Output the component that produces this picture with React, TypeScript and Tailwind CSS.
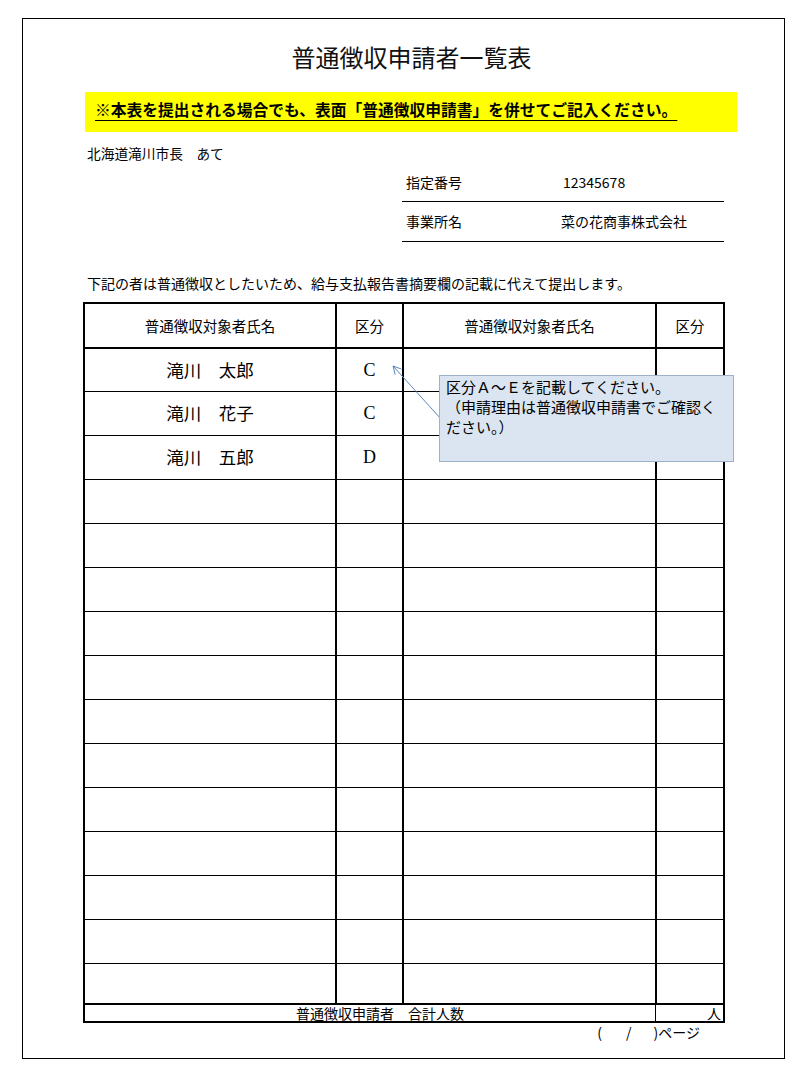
import React from 'react';

interface Row {
  name: string;
  kubun: string;
  height: string;
}

const rowHeights = [
  'h-[43px] border-b',
  'h-[44px] border-b',
  'h-[44px] border-b',
  'h-[44px] border-b',
  'h-[44px] border-b',
  'h-[44px] border-b',
  'h-[44px] border-b',
  'h-[44px] border-b',
  'h-[44px] border-b',
  'h-[44px] border-b',
  'h-[44px] border-b',
  'h-[44px] border-b',
  'h-[44px] border-b',
  'h-[44px] border-b',
  'h-[39px]',
];

const people = [
  { name: '滝川　太郎', kubun: 'C' },
  { name: '滝川　花子', kubun: 'C' },
  { name: '滝川　五郎', kubun: 'D' },
];

const rows: Row[] = rowHeights.map((height, i) => ({
  name: people[i]?.name ?? '',
  kubun: people[i]?.kubun ?? '',
  height,
}));

const App: React.FC = () => {
  return (
    <div className="min-h-[1077px] w-[806px] bg-white pl-[22px] pt-[18px] font-['Noto_Sans_CJK_JP','Noto_Sans',sans-serif] text-black">
      <div className="relative h-[1041px] w-[763px] border border-black">
        {/* title */}
        <div className="flex h-[73px] items-center justify-center pl-[16px] pt-[3px] text-[24px] leading-none text-[#111]">
          普通徴収申請者一覧表
        </div>

        {/* notice band */}
        <div className="ml-[62px] flex h-[40px] w-[652px] items-center bg-[#ffff00] pb-[4px] pl-[10px]">
          <span className="text-[15.75px] font-bold leading-none underline decoration-1 underline-offset-[4px]">
            ※本表を提出される場合でも、表面「普通徴収申請書」を併せてご記入ください。
          </span>
        </div>

        <p className="ml-[64px] mt-[11px] text-[13.7px] leading-[20px]">北海道滝川市長　あて</p>

        {/* office info */}
        <div className="ml-[379px] mt-[1px] w-[322px] text-[14px]">
          <div className="flex h-[38px] items-center border-b border-black pl-[4px]">
            <span className="w-[157px]">指定番号</span>
            <span>12345678</span>
          </div>
          <div className="flex h-[40px] items-center border-b border-black pl-[4px]">
            <span className="w-[155px]">事業所名</span>
            <span>菜の花商事株式会社</span>
          </div>
        </div>

        <p className="ml-[64px] mt-[31px] text-[14px] leading-[20px]">
          下記の者は普通徴収としたいため、給与支払報告書摘要欄の記載に代えて提出します。
        </p>

        {/* list table */}
        <div className="ml-[60px] mt-[9px] w-[642px] border-2 border-black">
          <div className="flex h-[45px] border-b-2 border-black text-[14.5px]">
            <div className="flex w-[252px] items-center justify-center border-r-2 border-black">普通徴収対象者氏名</div>
            <div className="flex w-[67px] items-center justify-center border-r-2 border-black">区分</div>
            <div className="flex w-[253px] items-center justify-center border-r-2 border-black">普通徴収対象者氏名</div>
            <div className="flex flex-1 items-center justify-center">区分</div>
          </div>
          {rows.map((row, i) => (
            <div key={i} className={`flex border-black ${row.height}`}>
              <div className="flex w-[252px] items-center justify-center border-r-2 border-black text-[17.5px]">
                {row.name}
              </div>
              <div className="flex w-[67px] items-center justify-center border-r-2 border-black font-['Liberation_Serif',serif] text-[18px]">
                {row.kubun}
              </div>
              <div className="w-[253px] border-r-2 border-black" />
              <div className="flex-1" />
            </div>
          ))}
          <div className="flex h-[18px] border-t-2 border-black text-[14px] leading-[16px]">
            <div className="flex w-[570px] justify-center pl-[20px]">普通徴収申請者　合計人数</div>
            <div className="flex flex-1 justify-end border-l border-black pr-[2px]">人</div>
          </div>
        </div>

        <div className="mt-[1px] flex justify-end pr-[84px] text-[14px] leading-[16px]">
          <span>(</span>
          <span className="ml-[24px]">/</span>
          <span className="ml-[22px]">)</span>
          <span>ページ</span>
        </div>

        {/* callout arrow */}
        <svg className="absolute left-[365px] top-[342px] z-10" width="60" height="62" viewBox="0 0 60 62">
          <line x1="5" y1="5" x2="53" y2="58" stroke="#5b87c0" strokeWidth="1" />
          <polyline points="13.5,8.1 5,5 7.2,13.7" fill="none" stroke="#5b87c0" strokeWidth="1" />
        </svg>

        {/* callout */}
        <div className="absolute left-[416px] top-[356px] z-20 h-[87px] w-[295px] border border-[#9fb1c8] bg-[#dbe5f1] pl-[6px] pt-[1px] text-[15px] leading-[20px]">
          区分Ａ～Ｅを記載してください。
          <br />
          （申請理由は普通徴収申請書でご確認く
          <br />
          ださい。）
        </div>
      </div>
    </div>
  );
};

export default App;
